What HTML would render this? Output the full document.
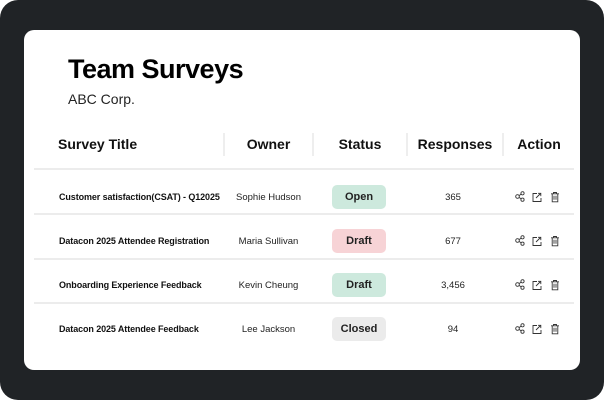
<!DOCTYPE html><html><head><style>
body{margin:0;width:604px;height:400px;background:#fff;font-family:"Liberation Sans",sans-serif;overflow:hidden}
.outer{position:absolute;left:0;top:0;width:604px;height:400px;background:#202326;border-radius:18px}
.card{position:absolute;left:24px;top:30px;width:556px;height:340px;background:#fff;border-radius:10px;overflow:hidden}
h1{position:absolute;left:44px;top:24px;margin:0;font-size:27px;font-weight:700;color:#000;letter-spacing:-0.5px}
.sub{position:absolute;left:44px;top:61px;font-size:14px;color:#222}
.hd{position:absolute;top:106px;font-size:14px;font-weight:700;color:#111;text-align:center}
.div{position:absolute;top:103px;width:2px;height:23px;background:#eee}
.line{position:absolute;left:10px;width:540px;height:2px;background:#ececec}
.c{position:absolute;font-size:9.5px;color:#222;text-align:center}
.t{position:absolute;left:35px;font-size:9px;font-weight:700;color:#111;letter-spacing:-0.1px}
.b{position:absolute;left:308px;width:54px;height:24px;border-radius:5px;font-size:11px;font-weight:700;color:#222;text-align:center;line-height:24px}
svg{position:absolute}
</style></head><body><div class="outer"></div><div class="card">
<h1>Team Surveys</h1><div class="sub">ABC Corp.</div>
<div class="hd" style="left:34px">Survey Title</div>
<div class="hd" style="left:200px;width:89px">Owner</div>
<div class="hd" style="left:289px;width:94px">Status</div>
<div class="hd" style="left:383px;width:96px">Responses</div>
<div class="hd" style="left:479px;width:72px">Action</div>
<div class="div" style="left:199px"></div><div class="div" style="left:288px"></div><div class="div" style="left:382px"></div><div class="div" style="left:478px"></div>
<div class="line" style="top:138px"></div><div class="line" style="top:183px"></div><div class="line" style="top:228px"></div><div class="line" style="top:272px"></div>

<div class="t" style="top:162px">Customer satisfaction(CSAT) - Q12025</div>
<div class="c" style="left:200px;width:89px;top:162px">Sophie Hudson</div>
<div class="b" style="top:155px;background:#cde9dd">Open</div>
<div class="c" style="left:383px;width:92px;top:162px">365</div>

<div class="t" style="top:206px">Datacon 2025 Attendee Registration</div>
<div class="c" style="left:200px;width:89px;top:206px">Maria Sullivan</div>
<div class="b" style="top:199px;background:#f7d3d6">Draft</div>
<div class="c" style="left:383px;width:92px;top:206px">677</div>

<div class="t" style="top:250px">Onboarding Experience Feedback</div>
<div class="c" style="left:200px;width:89px;top:250px">Kevin Cheung</div>
<div class="b" style="top:243px;background:#cde9dd">Draft</div>
<div class="c" style="left:383px;width:92px;top:250px">3,456</div>

<div class="t" style="top:294px">Datacon 2025 Attendee Feedback</div>
<div class="c" style="left:200px;width:89px;top:294px">Lee Jackson</div>
<div class="b" style="top:287px;background:#ebebeb">Closed</div>
<div class="c" style="left:383px;width:92px;top:294px">94</div>

<svg width="0" height="0"><defs>
<g id="ic" fill="none" stroke="#333" stroke-width="0.9">
<circle cx="2.5" cy="5.5" r="1.8"/><circle cx="7.5" cy="2.3" r="1.6"/><circle cx="7.5" cy="8.7" r="1.6"/><path d="M4 4.6L6 3.2M4 6.4L6 7.8"/>
<path d="M22 2.5H18v8h8V7M21 7l4.5-4.5M23 2.3h2.8v2.8"/>
<path d="M36 2.8h8M38.5 2.8V1.5h3v1.3M37.2 2.8v8h5.6v-8M39 4.8v4M41 4.8v4"/>
</g></defs></svg>
<svg style="left:491px;top:161px" width="48" height="13"><use href="#ic"/></svg>
<svg style="left:491px;top:205px" width="48" height="13"><use href="#ic"/></svg>
<svg style="left:491px;top:249px" width="48" height="13"><use href="#ic"/></svg>
<svg style="left:491px;top:293px" width="48" height="13"><use href="#ic"/></svg>
</div></body></html>
